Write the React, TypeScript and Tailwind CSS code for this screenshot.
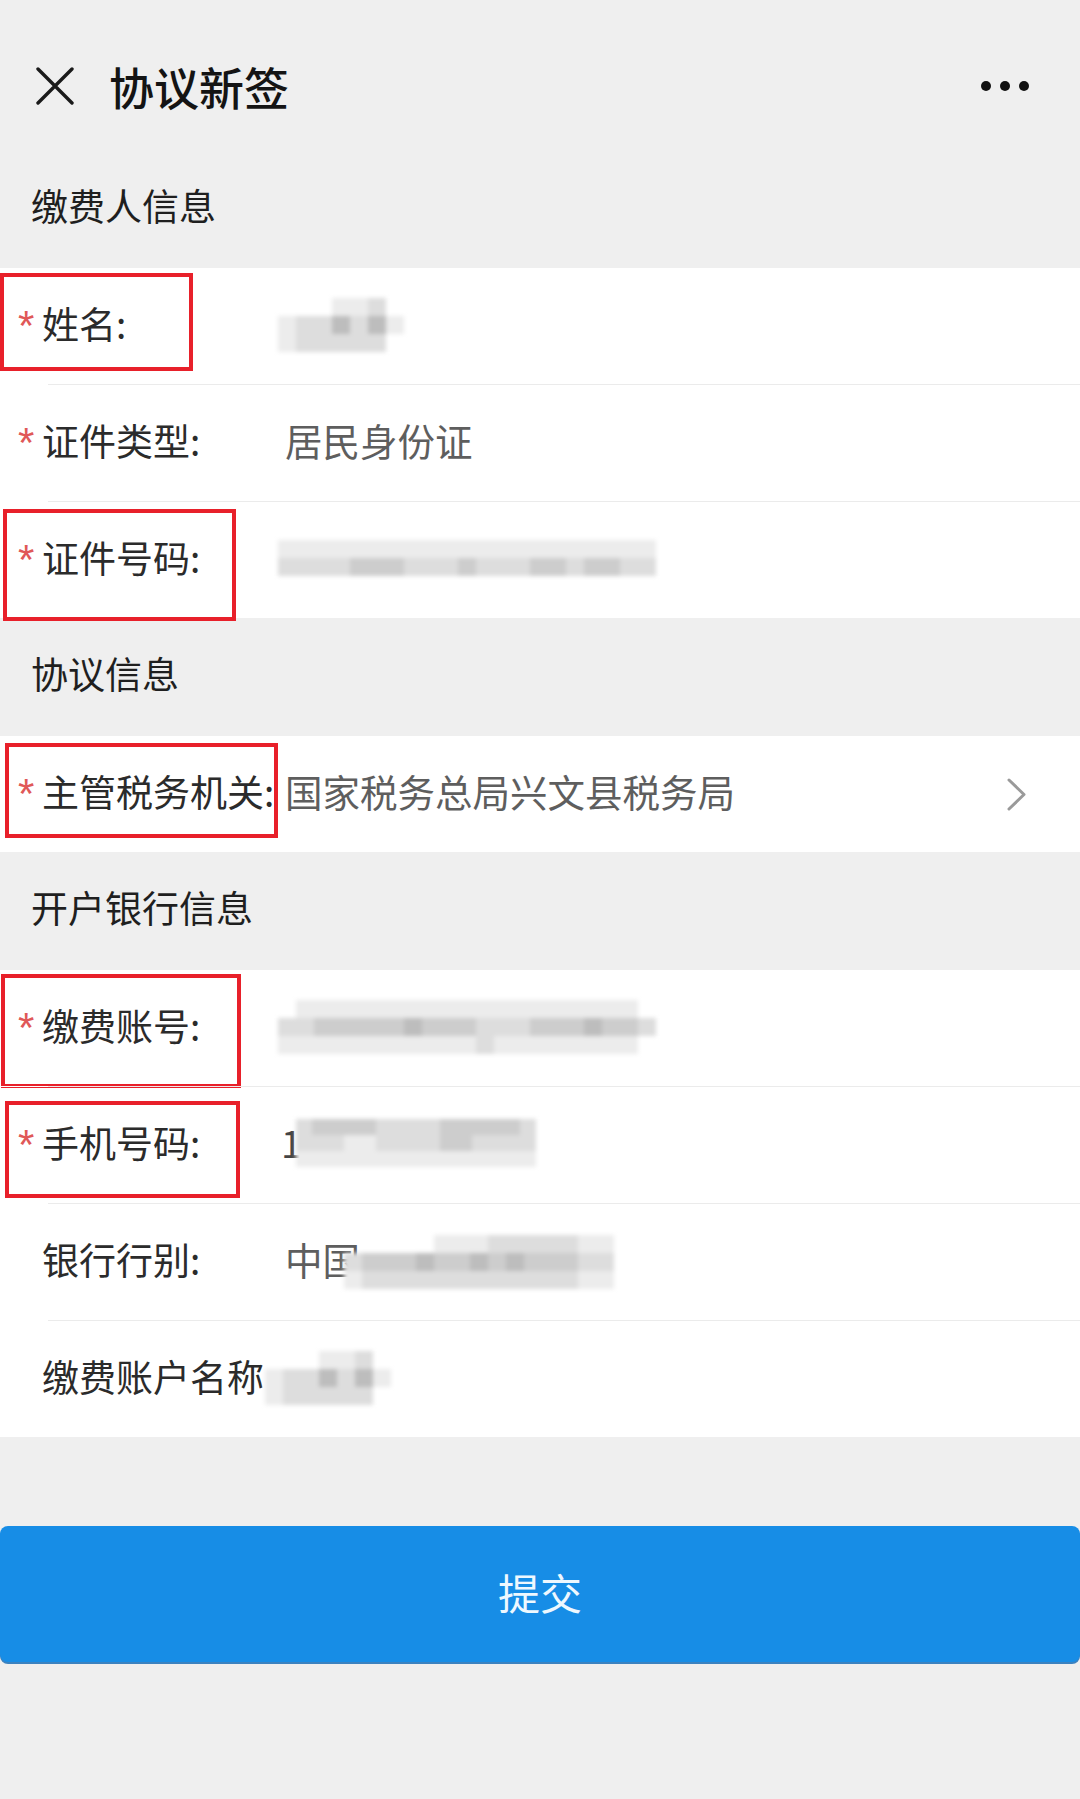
import React from "react";

type Shade = 0 | 1 | 2 | 3 | 4;

const shadeClass: Record<Shade, string> = {
  0: "bg-transparent",
  1: "bg-[#ececec]",
  2: "bg-[#dddddd]",
  3: "bg-[#cdcdcd]",
  4: "bg-[#bdbdbd]",
};

// pixelated / blurred value, as in the screenshot
const Mosaic = ({ rows, cell = 18 }: { rows: string[]; cell?: number }) => (
  <div className="flex flex-col blur-[2px]">
    {rows.map((r, i) => (
      <div key={i} className="flex">
        {r.split("").map((c, j) => (
          <div
            key={j}
            className={shadeClass[Number(c) as Shade]}
            style={{ width: cell, height: cell }}
          />
        ))}
      </div>
    ))}
  </div>
);

const RedBox = ({ className }: { className: string }) => (
  <div className={`absolute border-[4px] border-[#e8202a] pointer-events-none ${className}`} />
);

interface RowProps {
  label: string;
  required?: boolean;
  first?: boolean;
  children?: React.ReactNode;
  box?: string;
}

const Row = ({ label, required, first, children, box }: RowProps) => (
  <div className={`relative ${first ? "h-[116px]" : "h-[117px] border-t border-[#ebebeb]"}`}>
    {!first && <div className="absolute left-0 top-[-1px] w-[48px] h-px bg-white" />}
    <div className="flex items-center h-full pl-[18px] pr-[53px] pb-[6px]">
      <div className="w-[267px] shrink-0 flex items-center whitespace-nowrap">
        <span className="w-[24px] h-[37px] text-[42px] leading-none text-[#e05858] font-['Liberation_Sans',sans-serif]">
          {required ? "*" : ""}
        </span>
        <span className="text-[37px] leading-none text-[#2b2b2b]">{label}</span>
      </div>
      <div className="flex-1 flex items-center text-[37.5px] leading-none text-[#5e5e5e] whitespace-nowrap">
        {children}
      </div>
    </div>
    {box && <RedBox className={box} />}
  </div>
);

const Section = ({ title }: { title: string }) => (
  <div className="h-[118px] flex items-center pl-[31px] pb-[8px] text-[37px] leading-none text-[#1f1f1f]">
    {title}
  </div>
);

export default function App() {
  return (
    <div className="min-h-screen bg-[#efefef] font-['Noto_Sans_CJK_SC','Noto_Sans',sans-serif]">
      {/* Top bar */}
      <div className="h-[150px] flex items-center pl-[36px] pr-[51px] pt-[22px]">
        <svg width="38" height="38" viewBox="0 0 38 38" className="shrink-0">
          <path d="M2 2 L36 36 M36 2 L2 36" stroke="#1a1a1a" strokeWidth="3.4" strokeLinecap="round" />
        </svg>
        <div className="ml-[35px] text-[45px] leading-none font-medium text-[#141414]">协议新签</div>
        <div className="ml-auto flex items-center gap-[9px]">
          <span className="w-[10px] h-[10px] rounded-full bg-[#111]" />
          <span className="w-[10px] h-[10px] rounded-full bg-[#111]" />
          <span className="w-[10px] h-[10px] rounded-full bg-[#111]" />
        </div>
      </div>

      <Section title="缴费人信息" />
      <div className="bg-white">
        <Row label="姓名:" required first box="left-0 top-[5px] w-[193px] h-[98px]">
          <div className="-ml-[7px] mt-[4px]">
            <Mosaic rows={["0001120", "1224241", "1222220"]} />
          </div>
        </Row>
        <Row label="证件类型:" required>
          居民身份证
        </Row>
        <Row label="证件号码:" required box="left-[3px] top-[7px] w-[233px] h-[112px]">
          <div className="-ml-[7px] mt-[2px]">
            <Mosaic
              cell={18}
              rows={["111111111111111111111", "222233322232223323322"]}
            />
          </div>
        </Row>
      </div>

      <Section title="协议信息" />
      <div className="bg-white">
        <Row label="主管税务机关:" required first box="left-[5px] top-[7px] w-[273px] h-[95px]">
          <span className="flex-1">国家税务总局兴文县税务局</span>
          <svg width="20" height="33" viewBox="0 0 20 33" className="shrink-0 mt-[6px]">
            <path d="M2 2 L17 16.5 L2 31" fill="none" stroke="#9a9a9a" strokeWidth="3" strokeLinecap="round" strokeLinejoin="round" />
          </svg>
        </Row>
      </div>

      <Section title="开户银行信息" />
      <div className="bg-white">
        <Row label="缴费账号:" required first box="left-[1px] top-[4px] w-[240px] h-[114px]">
          <div className="-ml-[7px] mt-[4px]">
            <Mosaic
              rows={["011111111111111111110", "223333343332223334332", "111111111112111111110"]}
            />
          </div>
        </Row>
        <Row label="手机号码:" required box="left-[5px] top-[14px] w-[235px] h-[97px]">
          <span className="text-[#444] -ml-[4px]">1</span>
          <div className="-ml-[6px] mt-[2px]">
            <Mosaic rows={["2333322223333320", "2221122223322220", "1111111111111110"]} cell={16} />
          </div>
        </Row>
        <Row label="银行行别:">
          <span>中国</span>
          <div className="-ml-[16px] mt-[6px]">
            <Mosaic rows={["000001112222211", "233343343433322", "122222222222211"]} />
          </div>
        </Row>
        <Row label="缴费账户名称">
          <div className="-ml-[20px] mt-[4px]">
            <Mosaic rows={["0001120", "1224241", "1222220"]} />
          </div>
        </Row>
      </div>

      {/* Submit */}
      <div className="pt-[89px]">
        <button className="w-full h-[136px] rounded-[8px] bg-[#178de6] shadow-[0_2px_0_#3b82c0] text-[42px] leading-none text-[#eef8ff] pb-[4px]">
          提交
        </button>
      </div>
    </div>
  );
}
